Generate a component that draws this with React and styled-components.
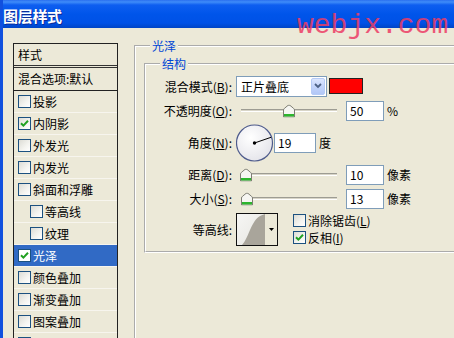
import React from 'react';
import styled, { createGlobalStyle } from 'styled-components';

const Global = createGlobalStyle`
  html, body { margin: 0; padding: 0; overflow: hidden; background: #ECE9D8; }
  body {
    font-family: "Noto Sans CJK SC", "Noto Sans", sans-serif;
    font-size: 12px;
    color: #000;
  }
  #root { width: 454px; height: 338px; }
`;

const Window = styled.div`
  position: relative;
  width: 454px;
  height: 338px;
  overflow: hidden;
  box-sizing: border-box;
  border-left: 3px solid #1150DE;
  background: #ECE9D8;
  display: flex;
  flex-direction: column;
`;

const TitleBar = styled.div`
  height: 28px;
  flex-shrink: 0;
  display: flex;
  align-items: center;
  padding-top: 3px;
  box-sizing: border-box;
  background: linear-gradient(
    to bottom,
    #2A6FEF 0px,
    #3F8CF9 2px,
    #0E5EF0 5px,
    #0055EA 14px,
    #0051E6 23px,
    #0045C6 28px
  );
`;

const Title = styled.div`
  color: #fff;
  font-weight: 700;
  font-size: 15px;
  letter-spacing: -0.3px;
  text-shadow: 1px 1px 0 #0B2C9A;
`;

const Watermark = styled.div`
  position: absolute;
  left: 294px;
  top: 12px;
  font-family: "Liberation Mono", "DejaVu Sans Mono", monospace;
  font-size: 28px;
  line-height: 28px;
  color: #EC3D66;
  opacity: 0.85;
  white-space: nowrap;
  pointer-events: none;
`;

const Body = styled.div`
  flex: 1;
  min-height: 0;
  display: flex;
  align-items: flex-start;
  gap: 16px;
  padding: 11px 0 0 10px;
`;

const StyleList = styled.div`
  width: 105px;
  flex-shrink: 0;
  margin-top: 4px;
  box-sizing: border-box;
  border: 1px solid #222;
  border-bottom: none;
`;

const ListHeader = styled.div`
  height: 21px;
  line-height: 21px;
  padding-left: 4px;
  border-bottom: 3px double #333;
`;

const BlendRow = styled.div`
  height: 22px;
  line-height: 22px;
  padding-left: 4px;
  border-bottom: 1px solid #222;
  white-space: nowrap;
`;

const EffectRow = styled.div`
  height: 21px;
  display: flex;
  align-items: center;
  padding-left: ${p => 4 + (p.$indent ? 12 : 0)}px;
  border-bottom: 1px solid #F7F5EE;
  background: ${p => (p.$selected ? '#316AC5' : 'transparent')};
  color: ${p => (p.$selected ? '#fff' : '#000')};
  white-space: nowrap;
`;

const Box = styled.span`
  width: 13px;
  height: 13px;
  box-sizing: border-box;
  flex-shrink: 0;
  border: 1px solid #1C5180;
  background: ${p => (p.$plain ? '#fff' : 'linear-gradient(135deg, #DCDCD5 0%, #F4F4F0 60%, #fff 100%)')};
  display: inline-flex;
  align-items: center;
  justify-content: center;
  margin-right: 2px;
`;

const CheckMark = () => (
  <svg width="9" height="9" viewBox="0 0 9 9">
    <path d="M1 4.2 L3.4 6.6 L8 1.8" fill="none" stroke="#21A121" strokeWidth="2" />
  </svg>
);

const CheckBox = ({ checked, plain }) => (
  <Box $plain={plain}>{checked ? <CheckMark /> : null}</Box>
);

const Main = styled.div`
  flex: 1;
  min-width: 0;
`;

const Group = styled.fieldset`
  margin: 0;
  border: 2px groove #fff;
  box-sizing: border-box;
  padding: ${p => p.$pad};
  width: ${p => p.$width || 'auto'};
  min-height: ${p => p.$minh || '0'};
`;

const Legend = styled.legend`
  color: #0046D5;
  font-size: 12px;
  line-height: 14px;
  padding: 0 2px;
  margin-left: ${p => p.$ml}px;
`;

const FormRow = styled.div`
  display: flex;
  align-items: ${p => p.$align || 'center'};
  height: ${p => p.$h}px;
  margin-top: ${p => p.$mt || 0}px;
  white-space: nowrap;
`;

const Label = styled.div`
  width: 86px;
  flex-shrink: 0;
  margin-right: 4px;
  text-align: right;
  align-self: center;
`;

const Key = styled.span`
  text-decoration: underline;
`;

const Select = styled.div`
  width: 91px;
  height: 21px;
  box-sizing: border-box;
  border: 1px solid #7F9DB9;
  background: #fff;
  display: flex;
  align-items: center;
  justify-content: space-between;
  padding: 0 1px 0 4px;
`;

const DropButton = styled.div`
  width: 14px;
  height: 17px;
  box-sizing: border-box;
  border: 1px solid #B6CBF6;
  border-radius: 2px;
  background: linear-gradient(to bottom, #DCE6FE 0%, #C3D4FB 50%, #B2C7F6 100%);
  display: flex;
  align-items: center;
  justify-content: center;
`;

const Swatch = styled.div`
  width: 34px;
  height: 16px;
  box-sizing: border-box;
  margin-left: 2px;
  border: 1px solid #222;
  background: #FF0000;
`;

const Slider = styled.div`
  position: relative;
  width: 106px;
  height: 20px;
  display: flex;
  align-items: center;
`;

const Track = styled.div`
  flex: 1;
  margin: 0 5px;
  height: 2px;
  border-top: 1px solid #9D9C93;
  border-bottom: 1px solid #fff;
  background: #D8D5C8;
  box-sizing: border-box;
  height: 3px;
`;

const Thumb = styled.div`
  position: absolute;
  top: 50%;
  width: 12px;
  height: 13px;
  transform: translate(-50%, -50%);
  display: flex;
`;

const NumberBox = styled.div`
  width: ${p => p.$w}px;
  height: 20px;
  box-sizing: border-box;
  margin-left: ${p => p.$ml || 0}px;
  border: 1px solid #7F9DB9;
  background: #fff;
  padding-left: 3px;
  line-height: 18px;
`;

const Unit = styled.span`
  margin-left: 3px;
`;

const Dial = styled.div`
  width: 38px;
  height: 38px;
  display: flex;
`;

const ContourBox = styled.div`
  width: 42px;
  height: 33px;
  box-sizing: border-box;
  border: 1px solid #111;
  display: flex;
  align-self: flex-start;
  margin-top: 1px;
  background: #ECE9D8;
`;

const ContourArrow = styled.div`
  flex: 1;
  display: flex;
  align-items: center;
  justify-content: center;
`;

const CheckColumn = styled.div`
  margin-left: 15px;
  align-self: flex-start;
  display: flex;
  flex-direction: column;
`;

const CheckLine = styled.div`
  height: 17px;
  display: flex;
  align-items: center;
`;

const effects = [
  { name: '投影' },
  { name: '内阴影', checked: true },
  { name: '外发光' },
  { name: '内发光' },
  { name: '斜面和浮雕' },
  { name: '等高线', indent: true },
  { name: '纹理', indent: true },
  { name: '光泽', checked: true, selected: true },
  { name: '颜色叠加' },
  { name: '渐变叠加' },
  { name: '图案叠加' },
  { name: '描边' },
];

const SliderControl = ({ pct }) => (
  <Slider>
    <Track />
    <Thumb style={{ left: `${6 + pct * 94}px` }}>
      <svg width="12" height="13" viewBox="0 0 12 13">
        <path d="M0.5 5.5 Q0.5 4.5 1.5 3.8 L5 0.9 Q6 0.2 7 0.9 L10.5 3.8 Q11.5 4.5 11.5 5.5 V12.5 H0.5 Z" fill="#F6F6F2" stroke="#7E7E74" />
        <rect x="1" y="9.5" width="10" height="2.5" fill="#2DB52D" />
      </svg>
    </Thumb>
  </Slider>
);

const angle = 19;
const rad = (angle * Math.PI) / 180;

export default function App() {
  return (
    <>
      <Global />
      <Window>
        <TitleBar>
          <Title>图层样式</Title>
        </TitleBar>
        <Body>
          <StyleList>
            <ListHeader>样式</ListHeader>
            <BlendRow>混合选项:默认</BlendRow>
            {effects.map(e => (
              <EffectRow key={e.name} $indent={e.indent} $selected={e.selected}>
                <CheckBox checked={e.checked} plain={e.selected} />
                {e.name}
              </EffectRow>
            ))}
          </StyleList>
          <Main>
            <Group $pad="4px 0 0 8px" $width="345px" $minh="330px">
              <Legend $ml={6}>光泽</Legend>
              <Group $pad="4px 0 5px 0">
                <Legend $ml={14}>结构</Legend>
                <FormRow $h={22}>
                  <Label>混合模式(<Key>B</Key>):</Label>
                  <Select>
                    <span>正片叠底</span>
                    <DropButton>
                      <svg width="8" height="6" viewBox="0 0 8 6">
                        <path d="M1 1 L4 4 L7 1" fill="none" stroke="#4D6185" strokeWidth="1.8" />
                      </svg>
                    </DropButton>
                  </Select>
                  <Swatch />
                </FormRow>
                <FormRow $h={21} $mt={3}>
                  <Label>不透明度(<Key>O</Key>):</Label>
                  <SliderControl pct={0.5} />
                  <NumberBox $w={38} $ml={4}>50</NumberBox>
                  <Unit>%</Unit>
                </FormRow>
                <FormRow $h={39} $mt={2}>
                  <Label>角度(<Key>N</Key>):</Label>
                  <Dial>
                    <svg width="38" height="38" viewBox="0 0 38 38">
                      <defs>
                        <radialGradient id="dialFill" cx="40%" cy="35%" r="75%">
                          <stop offset="0" stopColor="#FFFFFF" />
                          <stop offset="1" stopColor="#E2E2E8" />
                        </radialGradient>
                      </defs>
                      <circle cx="18.5" cy="19" r="18" fill="url(#dialFill)" stroke="#4E5B8C" strokeWidth="1.2" />
                      <line
                        x1="18.5"
                        y1="19"
                        x2={18.5 + 17.5 * Math.cos(rad)}
                        y2={19 - 17.5 * Math.sin(rad)}
                        stroke="#000"
                        strokeWidth="1"
                      />
                      <circle cx="18.5" cy="19" r="1.7" fill="#000" />
                    </svg>
                  </Dial>
                  <NumberBox $w={42}>19</NumberBox>
                  <Unit>度</Unit>
                </FormRow>
                <FormRow $h={21} $mt={2}>
                  <Label>距离(<Key>D</Key>):</Label>
                  <SliderControl pct={0.04} />
                  <NumberBox $w={38} $ml={4}>10</NumberBox>
                  <Unit>像素</Unit>
                </FormRow>
                <FormRow $h={21} $mt={3}>
                  <Label>大小(<Key>S</Key>):</Label>
                  <SliderControl pct={0.052} />
                  <NumberBox $w={38} $ml={4}>13</NumberBox>
                  <Unit>像素</Unit>
                </FormRow>
                <FormRow $h={34} $mt={3}>
                  <Label>等高线:</Label>
                  <ContourBox>
                    <svg width="28" height="31" viewBox="0 0 28 31">
                      <defs>
                        <linearGradient id="cbg" x1="0" y1="0" x2="1" y2="1">
                          <stop offset="0" stopColor="#F6F6F4" />
                          <stop offset="1" stopColor="#E6E5E0" />
                        </linearGradient>
                      </defs>
                      <rect width="28" height="31" fill="url(#cbg)" />
                      <path d="M5 31 C 12 24, 14 6, 24 1.5 L 28 0 L 28 31 Z" fill="#A9A59B" />
                    </svg>
                    <ContourArrow>
                      <svg width="5" height="3" viewBox="0 0 5 3">
                        <path d="M0 0 H5 L2.5 3 Z" fill="#000" />
                      </svg>
                    </ContourArrow>
                  </ContourBox>
                  <CheckColumn>
                    <CheckLine>
                      <CheckBox />
                      消除锯齿(<Key>L</Key>)
                    </CheckLine>
                    <CheckLine>
                      <CheckBox checked />
                      反相(<Key>I</Key>)
                    </CheckLine>
                  </CheckColumn>
                </FormRow>
              </Group>
            </Group>
          </Main>
        </Body>
        <Watermark>webjx.com</Watermark>
      </Window>
    </>
  );
}
